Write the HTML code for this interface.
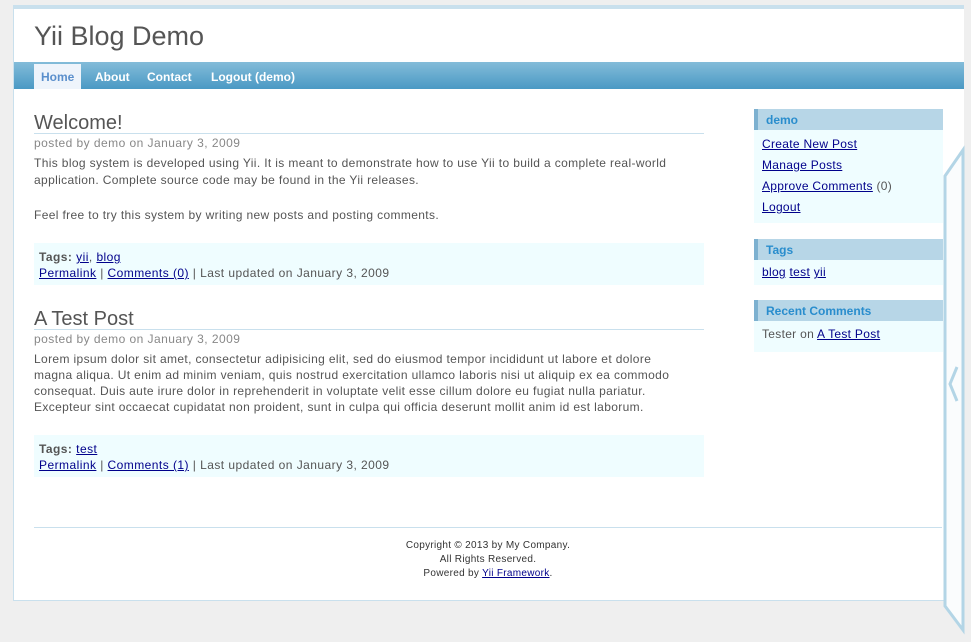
<!DOCTYPE html>
<html><head><meta charset="utf-8"><style>
*{margin:0;padding:0;box-sizing:border-box}
body{width:971px;height:642px;background:#efefef;font-family:"Liberation Sans",sans-serif;font-size:12px;color:#555;position:relative;overflow:hidden}
.abs{position:absolute}
a{color:#00008b;text-decoration:underline}
#page{left:13px;top:5px;width:951px;height:596px;background:#fff;border-top:4px solid #c9e0ed;border-bottom:1px solid #c9e0ed;border-left:1px solid #c9e0ed}
#logo{left:34px;top:21px;font-size:27px;color:#555}
#menu{left:14px;top:62px;width:950px;height:27px;background:linear-gradient(#83bcd9,#4a99c4)}
#menu span{position:absolute;top:2px;height:25px;line-height:27px;color:#fff;font-weight:bold;font-size:12px}
#menu .act{background:#eef4fb;color:#5a8fcc;padding:0 7px}
h2{position:absolute;left:34px;font-size:20px;font-weight:normal;color:#555;width:670px;border-bottom:1px solid #c9e0ed;height:22px;line-height:22px}
.meta{position:absolute;left:34px;color:#888;font-size:12px;letter-spacing:0.45px}
.txt{position:absolute;left:34px;width:672px;line-height:16px;font-size:12px;letter-spacing:0.36px}
.nav{position:absolute;left:34px;width:670px;height:42px;background:#effdff;padding:6px 5px;line-height:16px;letter-spacing:0.45px}
.port{position:absolute;left:754px;width:189px;background:#effdff}
.port .h{height:21px;background:#b7d6e7;border-left:4px solid #7db1d0;color:#298dcd;font-weight:bold;padding-left:8px;line-height:22px}
.port .c{padding:4px 8px;line-height:21px;letter-spacing:0.3px}
#foot{left:34px;top:527px;width:908px;border-top:1px solid #c9e0ed;text-align:center;font-size:10px;line-height:14px;padding-top:11px;color:#333;letter-spacing:0.3px}
</style></head><body>
<div id="page" class="abs"></div>
<div id="logo" class="abs">Yii Blog Demo</div>
<div id="menu" class="abs">
<span class="act" style="left:20px">Home</span>
<span style="left:81px">About</span>
<span style="left:133px">Contact</span>
<span style="left:197px">Logout (demo)</span>
</div>
<h2 style="top:112px">Welcome!</h2>
<div class="meta" style="top:136px">posted by demo on January 3, 2009</div>
<div class="txt" style="top:155px;line-height:17px">This blog system is developed using Yii. It is meant to demonstrate how to use Yii to build a complete real-world application. Complete source code may be found in the Yii releases.<br><span style="display:block;height:18px"></span>Feel free to try this system by writing new posts and posting comments.</div>
<div class="nav" style="top:243px"><b>Tags:</b> <a>yii</a>, <a>blog</a><br><a>Permalink</a> | <a>Comments (0)</a> | Last updated on January 3, 2009</div>
<h2 style="top:308px">A Test Post</h2>
<div class="meta" style="top:332px">posted by demo on January 3, 2009</div>
<div class="txt" style="top:351px">Lorem ipsum dolor sit amet, consectetur adipisicing elit, sed do eiusmod tempor incididunt ut labore et dolore<br>magna aliqua. Ut enim ad minim veniam, quis nostrud exercitation ullamco laboris nisi ut aliquip ex ea commodo<br>consequat. Duis aute irure dolor in reprehenderit in voluptate velit esse cillum dolore eu fugiat nulla pariatur.<br>Excepteur sint occaecat cupidatat non proident, sunt in culpa qui officia deserunt mollit anim id est laborum.</div>
<div class="nav" style="top:435px"><b>Tags:</b> <a>test</a><br><a>Permalink</a> | <a>Comments (1)</a> | Last updated on January 3, 2009</div>
<div class="port" style="top:109px;height:114px"><div class="h">demo</div><div class="c"><a>Create New Post</a><br><a>Manage Posts</a><br><a>Approve Comments</a> (0)<br><a>Logout</a></div></div>
<div class="port" style="top:239px;height:46px"><div class="h">Tags</div><div class="c" style="padding-top:2px"><a>blog</a> <a>test</a> <a>yii</a></div></div>
<div class="port" style="top:300px;height:52px"><div class="h">Recent Comments</div><div class="c" style="padding-top:3px">Tester on <a>A Test Post</a></div></div>
<div id="foot" class="abs">Copyright © 2013 by My Company.<br>All Rights Reserved.<br>Powered by <a>Yii Framework</a>.</div>
<svg class="abs" style="left:0;top:0" width="971" height="642">
<polygon points="963,150 945,176 945,606 963,630" fill="#fafcfd" stroke="#b3d5e6" stroke-width="3"/>
<polyline points="957,367 950,384 957,401" fill="none" stroke="#b3d5e6" stroke-width="3"/>
</svg>
</body></html>
